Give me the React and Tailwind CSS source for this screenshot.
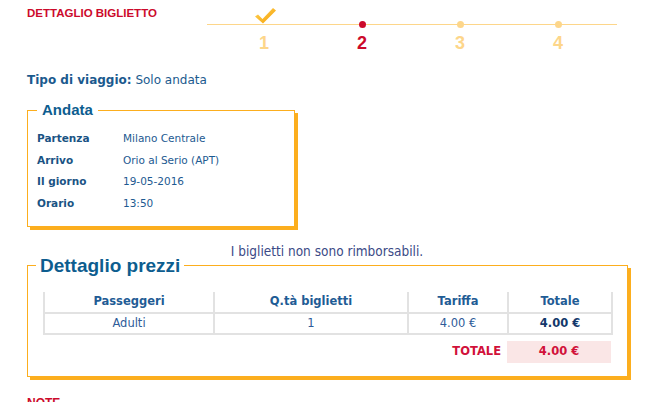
import React from "react";

const steps = [
  { n: "1", state: "done" },
  { n: "2", state: "current" },
  { n: "3", state: "todo" },
  { n: "4", state: "todo" },
];

function Check() {
  return (
    <svg width="21" height="16" viewBox="0 0 21 16" className="mt-[8px] ml-[2px]">
      <defs>
        <linearGradient id="chk" x1="0" y1="0" x2="1" y2="1">
          <stop offset="0%" stopColor="#ffd65c" />
          <stop offset="100%" stopColor="#f59d00" />
        </linearGradient>
      </defs>
      <polygon points="0,8.5 3,6.5 7.5,11 18,0 21,2.5 8,15.5" fill="url(#chk)" />
    </svg>
  );
}

function Stepper() {
  return (
    <div className="relative w-[410px] h-[56px]">
      <div className="absolute left-0 right-0 top-[23.5px] h-px bg-[#fdd68a]" />
      <div className="relative flex pl-[8px]">
        {steps.map((s) => (
          <div key={s.n} className="w-[98px] flex flex-col items-center">
            <div className="h-[28px] flex justify-center">
              {s.state === "done" ? (
                <Check />
              ) : (
                <div
                  className={
                    s.state === "current"
                      ? "mt-[20.5px] w-[7px] h-[7px] rounded-full bg-[#cc0a2b]"
                      : "mt-[20.5px] w-[7px] h-[7px] rounded-full bg-[#fdd68a]"
                  }
                />
              )}
            </div>
            <div
              className={
                s.state === "current"
                  ? "mt-[6px] text-[18px] leading-[18px] font-bold text-[#cc0a2b] font-['Liberation_Sans',Arial,sans-serif]"
                  : "mt-[6px] text-[18px] leading-[18px] font-bold text-[#fdd68a] font-['Liberation_Sans',Arial,sans-serif]"
              }
            >
              {s.n}
            </div>
          </div>
        ))}
      </div>
    </div>
  );
}

const andata = [
  ["Partenza", "Milano Centrale"],
  ["Arrivo", "Orio al Serio (APT)"],
  ["Il giorno", "19-05-2016"],
  ["Orario", "13:50"],
];

export default function App() {
  return (
    <div className="w-[650px] h-[402px] overflow-hidden bg-white pl-[27px] font-['DejaVu_Sans',Verdana,sans-serif] text-[#1b5a8e]">
      <div className="flex items-start">
        <div className="w-[180px] pt-[7px] text-[11.5px] leading-[13px] font-bold text-[#cc0a2b] font-['Liberation_Sans',Arial,sans-serif]">
          DETTAGLIO BIGLIETTO
        </div>
        <Stepper />
      </div>

      <div className="mt-[16px] text-[12px] leading-[16px]">
        <span className="font-bold">Tipo di viaggio:</span> Solo andata
      </div>

      <fieldset className="mt-[13px] w-[268px] border border-[#fcae1e] shadow-[3px_3px_0_#fcae1e] pl-[9px] pb-[11px]">
        <legend className="px-[5px] text-[15px] leading-[18px] font-bold text-[#0d5d8f] font-['Liberation_Sans',Arial,sans-serif]">
          Andata
        </legend>
        <div className="pt-[9px] text-[10.5px]">
          {andata.map(([k, v]) => (
            <div key={k} className="flex h-[21.7px] items-center">
              <div className="w-[86px] font-bold text-[#1a5384]">{k}</div>
              <div className="text-[#1d5a91]">{v}</div>
            </div>
          ))}
        </div>
      </fieldset>

      <div className="mt-[15px] w-[600px] text-center text-[13.5px] leading-[18px] text-[#3b4a86] font-['DejaVu_Sans_Condensed','DejaVu_Sans',sans-serif]">
        I biglietti non sono rimborsabili.
      </div>

      <fieldset className="mt-[-5px] w-[600px] border border-[#fcae1e] shadow-[3px_3px_0_#fcae1e] pl-[15px] pr-[14px] pb-[13px]">
        <legend className="-ml-[7px] px-[4px] text-[19px] leading-[22px] font-bold text-[#0d5d8f] font-['Liberation_Sans',Arial,sans-serif]">
          Dettaglio prezzi
        </legend>
        <table className="mt-[15px] w-[568px] border-collapse text-[11.5px] table-fixed">
          <colgroup>
            <col className="w-[170px]" />
            <col className="w-[194px]" />
            <col className="w-[100px]" />
            <col className="w-[104px]" />
          </colgroup>
          <thead>
            <tr className="h-[21px] text-[#1f5c95]">
              <th className="border-x-2 border-b-2 border-[#e2e2e2] font-bold">Passeggeri</th>
              <th className="border-x-2 border-b-2 border-[#e2e2e2] font-bold">Q.tà biglietti</th>
              <th className="border-x-2 border-b-2 border-[#e2e2e2] font-bold">Tariffa</th>
              <th className="border-x-2 border-b-2 border-[#e2e2e2] font-bold">Totale</th>
            </tr>
          </thead>
          <tbody>
            <tr className="h-[21px] text-center text-[#2f5c99]">
              <td className="border-2 border-t-0 border-[#e2e2e2]">Adulti</td>
              <td className="border-2 border-t-0 border-[#e2e2e2]">1</td>
              <td className="border-2 border-t-0 border-[#e2e2e2]">4.00 €</td>
              <td className="border-2 border-t-0 border-[#e2e2e2] font-bold text-[#14386b]">4.00 €</td>
            </tr>
          </tbody>
        </table>
        <div className="mt-[6px] flex justify-end items-center w-[568px] text-[11.5px] font-bold text-[#d1113a]">
          <span className="pr-[6px]">TOTALE</span>
          <div className="w-[104px] h-[22px] flex items-center justify-center bg-[#fae6e6]">4.00 €</div>
        </div>
      </fieldset>

      <div className="mt-[19px] text-[12px] leading-[14px] font-bold text-[#cc0a2b] font-['Liberation_Sans',Arial,sans-serif]">
        NOTE
      </div>
    </div>
  );
}
